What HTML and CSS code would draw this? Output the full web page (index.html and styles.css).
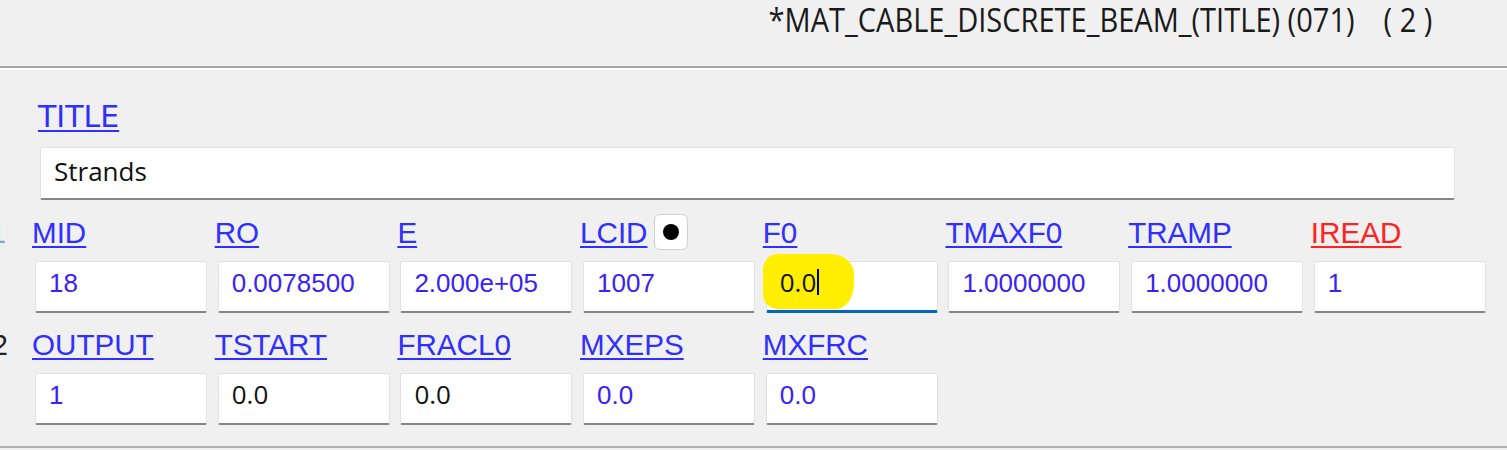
FILE: index.html
```html
<!DOCTYPE html>
<html>
<head>
<meta charset="utf-8">
<link rel="stylesheet" href="styles.css">
</head>
<body>
<div class="header">
  <div class="hdr-text"><span class="hdr-main">*MAT_CABLE_DISCRETE_BEAM_(TITLE) (071)</span><span class="hdr-count">( 2 )</span></div>
</div>
<div class="panel">
  <div class="title-label"><span class="lbl-title">TITLE</span></div>
  <div class="field title-field"><span class="val-dark">Strands</span></div>

  <div class="label-row">
    <div class="rownum rownum-1">1</div>
    <div class="grid">
      <div class="cell"><span class="lbl">MID</span></div>
      <div class="cell"><span class="lbl">RO</span></div>
      <div class="cell"><span class="lbl">E</span></div>
      <div class="cell"><span class="lbl">LCID</span><span class="pick-btn"><span class="dot"></span></span></div>
      <div class="cell"><span class="lbl">F0</span></div>
      <div class="cell"><span class="lbl">TMAXF0</span></div>
      <div class="cell"><span class="lbl">TRAMP</span></div>
      <div class="cell"><span class="lbl lbl-red">IREAD</span></div>
    </div>
  </div>
  <div class="grid input-row">
    <div class="field"><span class="val">18</span></div>
    <div class="field"><span class="val">0.0078500</span></div>
    <div class="field"><span class="val">2.000e+05</span></div>
    <div class="field"><span class="val">1007</span></div>
    <div class="field field-active"><span class="highlight"></span><span class="val-dark active-text">0.0<span class="caret"></span></span></div>
    <div class="field"><span class="val">1.0000000</span></div>
    <div class="field"><span class="val">1.0000000</span></div>
    <div class="field"><span class="val">1</span></div>
  </div>

  <div class="label-row row-2">
    <div class="rownum rownum-2">2</div>
    <div class="grid">
      <div class="cell"><span class="lbl">OUTPUT</span></div>
      <div class="cell"><span class="lbl">TSTART</span></div>
      <div class="cell"><span class="lbl">FRACL0</span></div>
      <div class="cell"><span class="lbl">MXEPS</span></div>
      <div class="cell"><span class="lbl">MXFRC</span></div>
    </div>
  </div>
  <div class="grid input-row">
    <div class="field"><span class="val">1</span></div>
    <div class="field"><span class="val-dark">0.0</span></div>
    <div class="field"><span class="val-dark">0.0</span></div>
    <div class="field"><span class="val">0.0</span></div>
    <div class="field"><span class="val">0.0</span></div>
  </div>
</div>
</body>
</html>
```

FILE: styles.css
```css
html, body {
  margin: 0;
  padding: 0;
  background: #f0f0f0;
  overflow: hidden;
}
body {
  width: 1507px;
  height: 450px;
  font-family: "Liberation Sans", Arial, sans-serif;
}

.header {
  height: 68px;
  box-sizing: border-box;
  padding-top: 0;
  padding-right: 75px;
  display: flex;
  justify-content: flex-end;
  align-items: flex-start;
  border-bottom: 2px solid #a4a4a4;
  font-family: "Open Sans", sans-serif;
  font-size: 33px;
  line-height: 40px;
  color: #1a1a1a;
  white-space: pre;
}
.hdr-text {
  display: inline-flex;
  transform: scaleX(0.88);
  transform-origin: right center;
}
.hdr-count {
  margin-left: 33px;
}

.panel {
  border-top: 2px solid #ffffff;
  border-bottom: 2px solid #b0b0b0;
  padding: 32px 0 21px 35px;
}

.title-label {
  height: 30px;
  margin-left: 3px;
  font-family: "DejaVu Sans", sans-serif;
  font-size: 30px;
  line-height: 30px;
}
.lbl-title {
  color: #2f2fff;
  text-decoration: underline;
  text-decoration-thickness: 2px;
  text-underline-offset: 3px;
}

.field {
  position: relative;
  box-sizing: border-box;
  height: 52px;
  background: #ffffff;
  border: 1px solid #e2e2e2;
  border-bottom: 2px solid #858585;
  border-radius: 2px;
  padding: 0 0 6px 13px;
  display: flex;
  align-items: center;
  font-size: 26px;
}
.title-field {
  margin-top: 15px;
  margin-left: 5px;
  width: 1415px;
  height: 53px;
  padding-bottom: 2px;
}

.val {
  color: #3a22f5;
  font-family: "Liberation Sans", Arial, sans-serif;
  font-size: 26px;
}
.val-dark {
  color: #111111;
  font-family: "Open Sans", sans-serif;
  font-size: 26px;
  margin-bottom: 3px;
}

.label-row {
  display: flex;
  height: 30px;
  margin-top: 18px;
}
.label-row.row-2 {
  margin-top: 17px;
}
.rownum {
  width: 40px;
  margin-left: -67px;
  margin-right: 27px;
  text-align: right;
  font-size: 29px;
  line-height: 30px;
}
.rownum-1 {
  color: #7aa6d6;
  margin-left: -69px;
  margin-right: 29px;
}
.rownum-2 { color: #222222; }

.grid {
  display: grid;
  grid-template-columns: repeat(8, 172px);
  column-gap: 10.7px;
}
.input-row {
  margin-top: 13px;
}

.cell {
  margin-left: -3px;
  display: flex;
  align-items: flex-start;
  height: 30px;
}
.lbl {
  font-size: 29.6px;
  line-height: 30px;
  color: #2f2fff;
  text-decoration: underline;
  text-decoration-thickness: 2px;
  text-underline-offset: 3px;
}
.lbl-red {
  color: #ff2222;
}

.pick-btn {
  box-sizing: border-box;
  width: 34px;
  height: 36px;
  margin-left: 6px;
  margin-top: -4px;
  background: #ffffff;
  border: 1px solid #cfcfcf;
  border-radius: 6px;
  display: flex;
  align-items: center;
  justify-content: center;
}
.dot {
  width: 16px;
  height: 16px;
  border-radius: 50%;
  background: #000000;
}

.field-active {
  border-bottom: 3px solid #0067c0;
}
.highlight {
  position: absolute;
  left: -4px;
  top: -8px;
  width: 91px;
  height: 55px;
  background: #ffee00;
  border-radius: 14px 24px 18px 16px / 16px 20px 26px 14px;
}
.active-text {
  position: relative;
  display: inline-flex;
  align-items: center;
}
.caret {
  display: inline-block;
  width: 2px;
  height: 26px;
  margin-left: 1px;
  background: #000000;
}
```
